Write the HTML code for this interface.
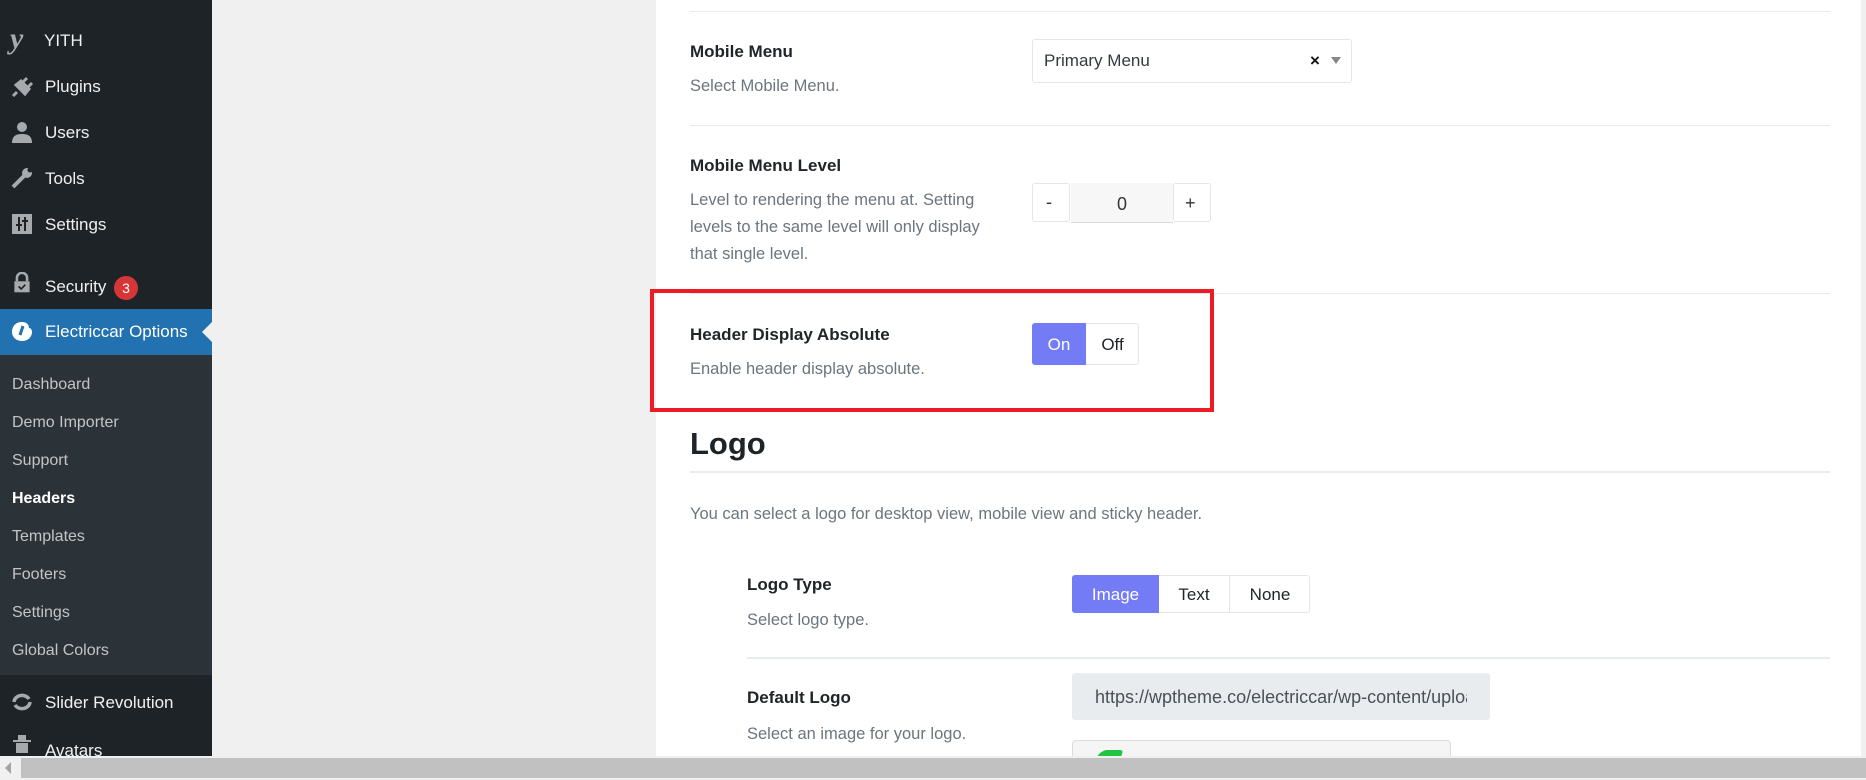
<!DOCTYPE html>
<html><head><meta charset="utf-8"><style>
*{margin:0;padding:0;box-sizing:border-box}
body{width:1866px;height:780px;overflow:hidden;background:#f0f0f1;font-family:"Liberation Sans",sans-serif;position:relative}
.a{position:absolute;white-space:nowrap}
#sb{position:absolute;left:0;top:0;width:212px;height:757px;background:#1d2327}
.mi{position:absolute;left:45px;color:#f0f0f1;font-size:17px;line-height:20px}
.ic{position:absolute;left:10px;width:24px;height:22px}
.si{position:absolute;left:12px;color:#c3c4c7;font-size:16px;line-height:20px}
#panel{position:absolute;left:656px;top:0;width:1205px;height:757px;background:#fff}
.t{position:absolute;font-weight:bold;font-size:17px;color:#212529}
.d{position:absolute;font-size:16.5px;color:#6c757d;line-height:27px}
.hr{position:absolute;height:1px;background:#e9ecef}
.bx{position:absolute;border:1px solid #e3e6e9;border-radius:3px;background:#fff}
</style></head><body>
<div id="sb">
 <div class="mi" style="top:31px;left:44px">YITH</div>
 <div class="a" style="left:10px;top:22px;font-family:'Liberation Serif',serif;font-style:italic;font-weight:bold;font-size:30px;color:#a7aaad">y</div>
 <div class="mi" style="top:77px">Plugins</div>
 <svg class="ic" style="top:76px" viewBox="0 0 24 22"><path d="M3 20l4-4M6 9l9 9 4-5-8-8zM13 6l4-4M18 11l4-4" stroke="#a7aaad" stroke-width="3" fill="#a7aaad"/></svg>
 <div class="mi" style="top:123px">Users</div>
 <svg class="ic" style="top:121px" viewBox="0 0 24 22"><circle cx="12" cy="6" r="5" fill="#a7aaad"/><path d="M2 22c0-7 4-9 10-9s10 2 10 9z" fill="#a7aaad"/></svg>
 <div class="mi" style="top:169px">Tools</div>
 <svg class="ic" style="top:167px" viewBox="0 0 24 22"><path d="M3 20L14 9" stroke="#a7aaad" stroke-width="4"/><circle cx="17" cy="6" r="5" fill="#a7aaad"/><circle cx="20" cy="3" r="2.5" fill="#1d2327"/></svg>
 <div class="mi" style="top:215px">Settings</div>
 <svg class="ic" style="top:213px" viewBox="0 0 24 22"><rect x="2" y="1" width="20" height="20" fill="#a7aaad"/><path d="M9 4v14M15 4v14M6 12h6M12 8h6" stroke="#1d2327" stroke-width="2"/></svg>
 <div class="mi" style="top:277px">Security</div>
 <div class="a" style="left:114px;top:276px;width:24px;height:24px;border-radius:12px;background:#d63638;color:#fff;font-size:14px;text-align:center;line-height:24px">3</div>
 <svg class="ic" style="top:272px" viewBox="0 0 24 26"><path d="M6 11V7a6 6 0 0112 0v4" stroke="#a7aaad" stroke-width="3" fill="none"/><rect x="3" y="11" width="18" height="13" fill="#a7aaad"/><path d="M8 17l3 3 5-5" stroke="#1d2327" stroke-width="2" fill="none"/></svg>
 <div class="a" style="left:0;top:309px;width:212px;height:46px;background:#2271b1"></div>
 <div class="mi" style="top:322px;color:#fff">Electriccar Options</div>
 <div class="a" style="left:202px;top:322px;width:0;height:0;border:10px solid transparent;border-right-color:#f0f0f1;border-left:0"></div>
 <svg class="ic" style="top:320px" viewBox="0 0 24 22"><path d="M12 2C5 2 2 7 2 12s4 9 10 9 10-4 10-9c0-2-1-4-3-4 0-3-2-6-7-6z" fill="#fff"/><path d="M13 6l-3 9" stroke="#2271b1" stroke-width="3"/></svg>
 <div class="a" style="left:0;top:355px;width:212px;height:320px;background:#2c3338"></div>
 <div class="si" style="top:375px">Dashboard</div>
 <div class="si" style="top:413px">Demo Importer</div>
 <div class="si" style="top:451px">Support</div>
 <div class="si" style="top:489px;color:#fff;font-weight:bold">Headers</div>
 <div class="si" style="top:527px">Templates</div>
 <div class="si" style="top:565px">Footers</div>
 <div class="si" style="top:603px">Settings</div>
 <div class="si" style="top:641px">Global Colors</div>
 <div class="mi" style="top:693px">Slider Revolution</div>
 <svg class="ic" style="top:691px" viewBox="0 0 24 22"><path d="M4 11a8 7 0 0115-3M20 11a8 7 0 01-15 3" stroke="#a7aaad" stroke-width="3.5" fill="none"/></svg>
 <div class="mi" style="top:741px">Avatars</div>
 <svg class="ic" style="top:735px" viewBox="0 0 24 22"><rect x="8" y="0" width="8" height="6" fill="#a7aaad"/><rect x="3" y="5" width="18" height="2" fill="#a7aaad"/><rect x="6" y="8" width="12" height="10" fill="#a7aaad"/></svg>
</div>

<div id="panel"></div>
<div class="hr" style="left:690px;top:11px;width:1140px"></div>

<div class="t" style="left:690px;top:42px">Mobile Menu</div>
<div class="d" style="left:690px;top:73px">Select Mobile Menu.</div>
<div class="bx" style="left:1032px;top:39px;width:320px;height:44px"></div>
<div class="a" style="left:1044px;top:51px;font-size:17px;color:#343a40">Primary Menu</div>
<div class="a" style="left:1310px;top:51px;font-size:17px;font-weight:bold;color:#111">×</div>
<div class="a" style="left:1331px;top:57px;width:0;height:0;border:5px solid transparent;border-top:7px solid #888;border-bottom:0"></div>
<div class="hr" style="left:690px;top:125px;width:1140px"></div>

<div class="t" style="left:690px;top:156px">Mobile Menu Level</div>
<div class="d" style="left:690px;top:187px">Level to rendering the menu at. Setting<br>levels to the same level will only display<br>that single level.</div>
<div class="bx" style="left:1032px;top:183px;width:38px;height:39px"></div>
<div class="a" style="left:1046px;top:192px;font-size:18px;color:#333">-</div>
<div class="a" style="left:1071px;top:183px;width:102px;height:40px;background:#f7f7f7;border-bottom:1px solid #d5d8db"></div>
<div class="a" style="left:1117px;top:194px;font-size:18px;color:#333">0</div>
<div class="bx" style="left:1173px;top:183px;width:38px;height:39px"></div>
<div class="a" style="left:1185px;top:193px;font-size:18px;color:#333">+</div>
<div class="hr" style="left:690px;top:293px;width:1140px"></div>

<div class="a" style="left:650px;top:289px;width:564px;height:123px;border:4px solid #ed1c24"></div>
<div class="t" style="left:690px;top:325px">Header Display Absolute</div>
<div class="d" style="left:690px;top:356px">Enable header display absolute.</div>
<div class="bx" style="left:1032px;top:323px;width:107px;height:42px"></div>
<div class="a" style="left:1032px;top:323px;width:54px;height:42px;background:#737cf5;border-radius:3px 0 0 3px;color:#fff;font-size:17px;text-align:center;line-height:44px">On</div>
<div class="a" style="left:1086px;top:323px;width:53px;height:42px;color:#212529;font-size:17px;text-align:center;line-height:44px">Off</div>

<div class="a" style="left:690px;top:426px;font-size:31px;font-weight:bold;color:#1d2327">Logo</div>
<div class="hr" style="left:690px;top:471px;width:1140px;height:2px"></div>
<div class="d" style="left:690px;top:501px">You can select a logo for desktop view, mobile view and sticky header.</div>

<div class="t" style="left:747px;top:575px">Logo Type</div>
<div class="d" style="left:747px;top:607px">Select logo type.</div>
<div class="bx" style="left:1072px;top:575px;width:238px;height:38px"></div>
<div class="a" style="left:1072px;top:575px;width:87px;height:38px;background:#737cf5;border-radius:3px 0 0 3px;color:#fff;font-size:17px;text-align:center;line-height:40px">Image</div>
<div class="a" style="left:1159px;top:575px;width:71px;height:38px;border-right:1px solid #e3e6e9;color:#212529;font-size:17px;text-align:center;line-height:40px">Text</div>
<div class="a" style="left:1230px;top:575px;width:80px;height:38px;color:#212529;font-size:17px;text-align:center;line-height:40px">None</div>
<div class="hr" style="left:747px;top:657px;width:1083px;height:2px"></div>

<div class="t" style="left:747px;top:688px">Default Logo</div>
<div class="d" style="left:747px;top:721px">Select an image for your logo.</div>
<div class="a" style="left:1072px;top:673px;width:418px;height:47px;background:#e9ecef;border-radius:3px"></div>
<div class="a" style="left:1095px;top:673px;width:372px;height:47px;overflow:hidden;font-size:18px;color:#495057;line-height:49px">https://wptheme.co/electriccar/wp-content/uploads</div>
<div class="a" style="left:1072px;top:740px;width:379px;height:30px;background:#f5f5f5;border:1px solid #dcdcdc;border-radius:4px"></div>
<div class="a" style="left:1098px;top:750px;width:24px;height:8px;background:#22c543;border-radius:10px 4px 0 0;transform:skewX(-20deg)"></div>

<div class="a" style="left:0;top:756px;width:1866px;height:24px;background:#f0f0f0"></div>
<div class="a" style="left:21px;top:758px;width:1845px;height:20px;background:#c1c1c1"></div>
<div class="a" style="left:5px;top:762px;width:0;height:0;border:6px solid transparent;border-right:6px solid #a3a3a3;border-left:0"></div>
</body></html>
